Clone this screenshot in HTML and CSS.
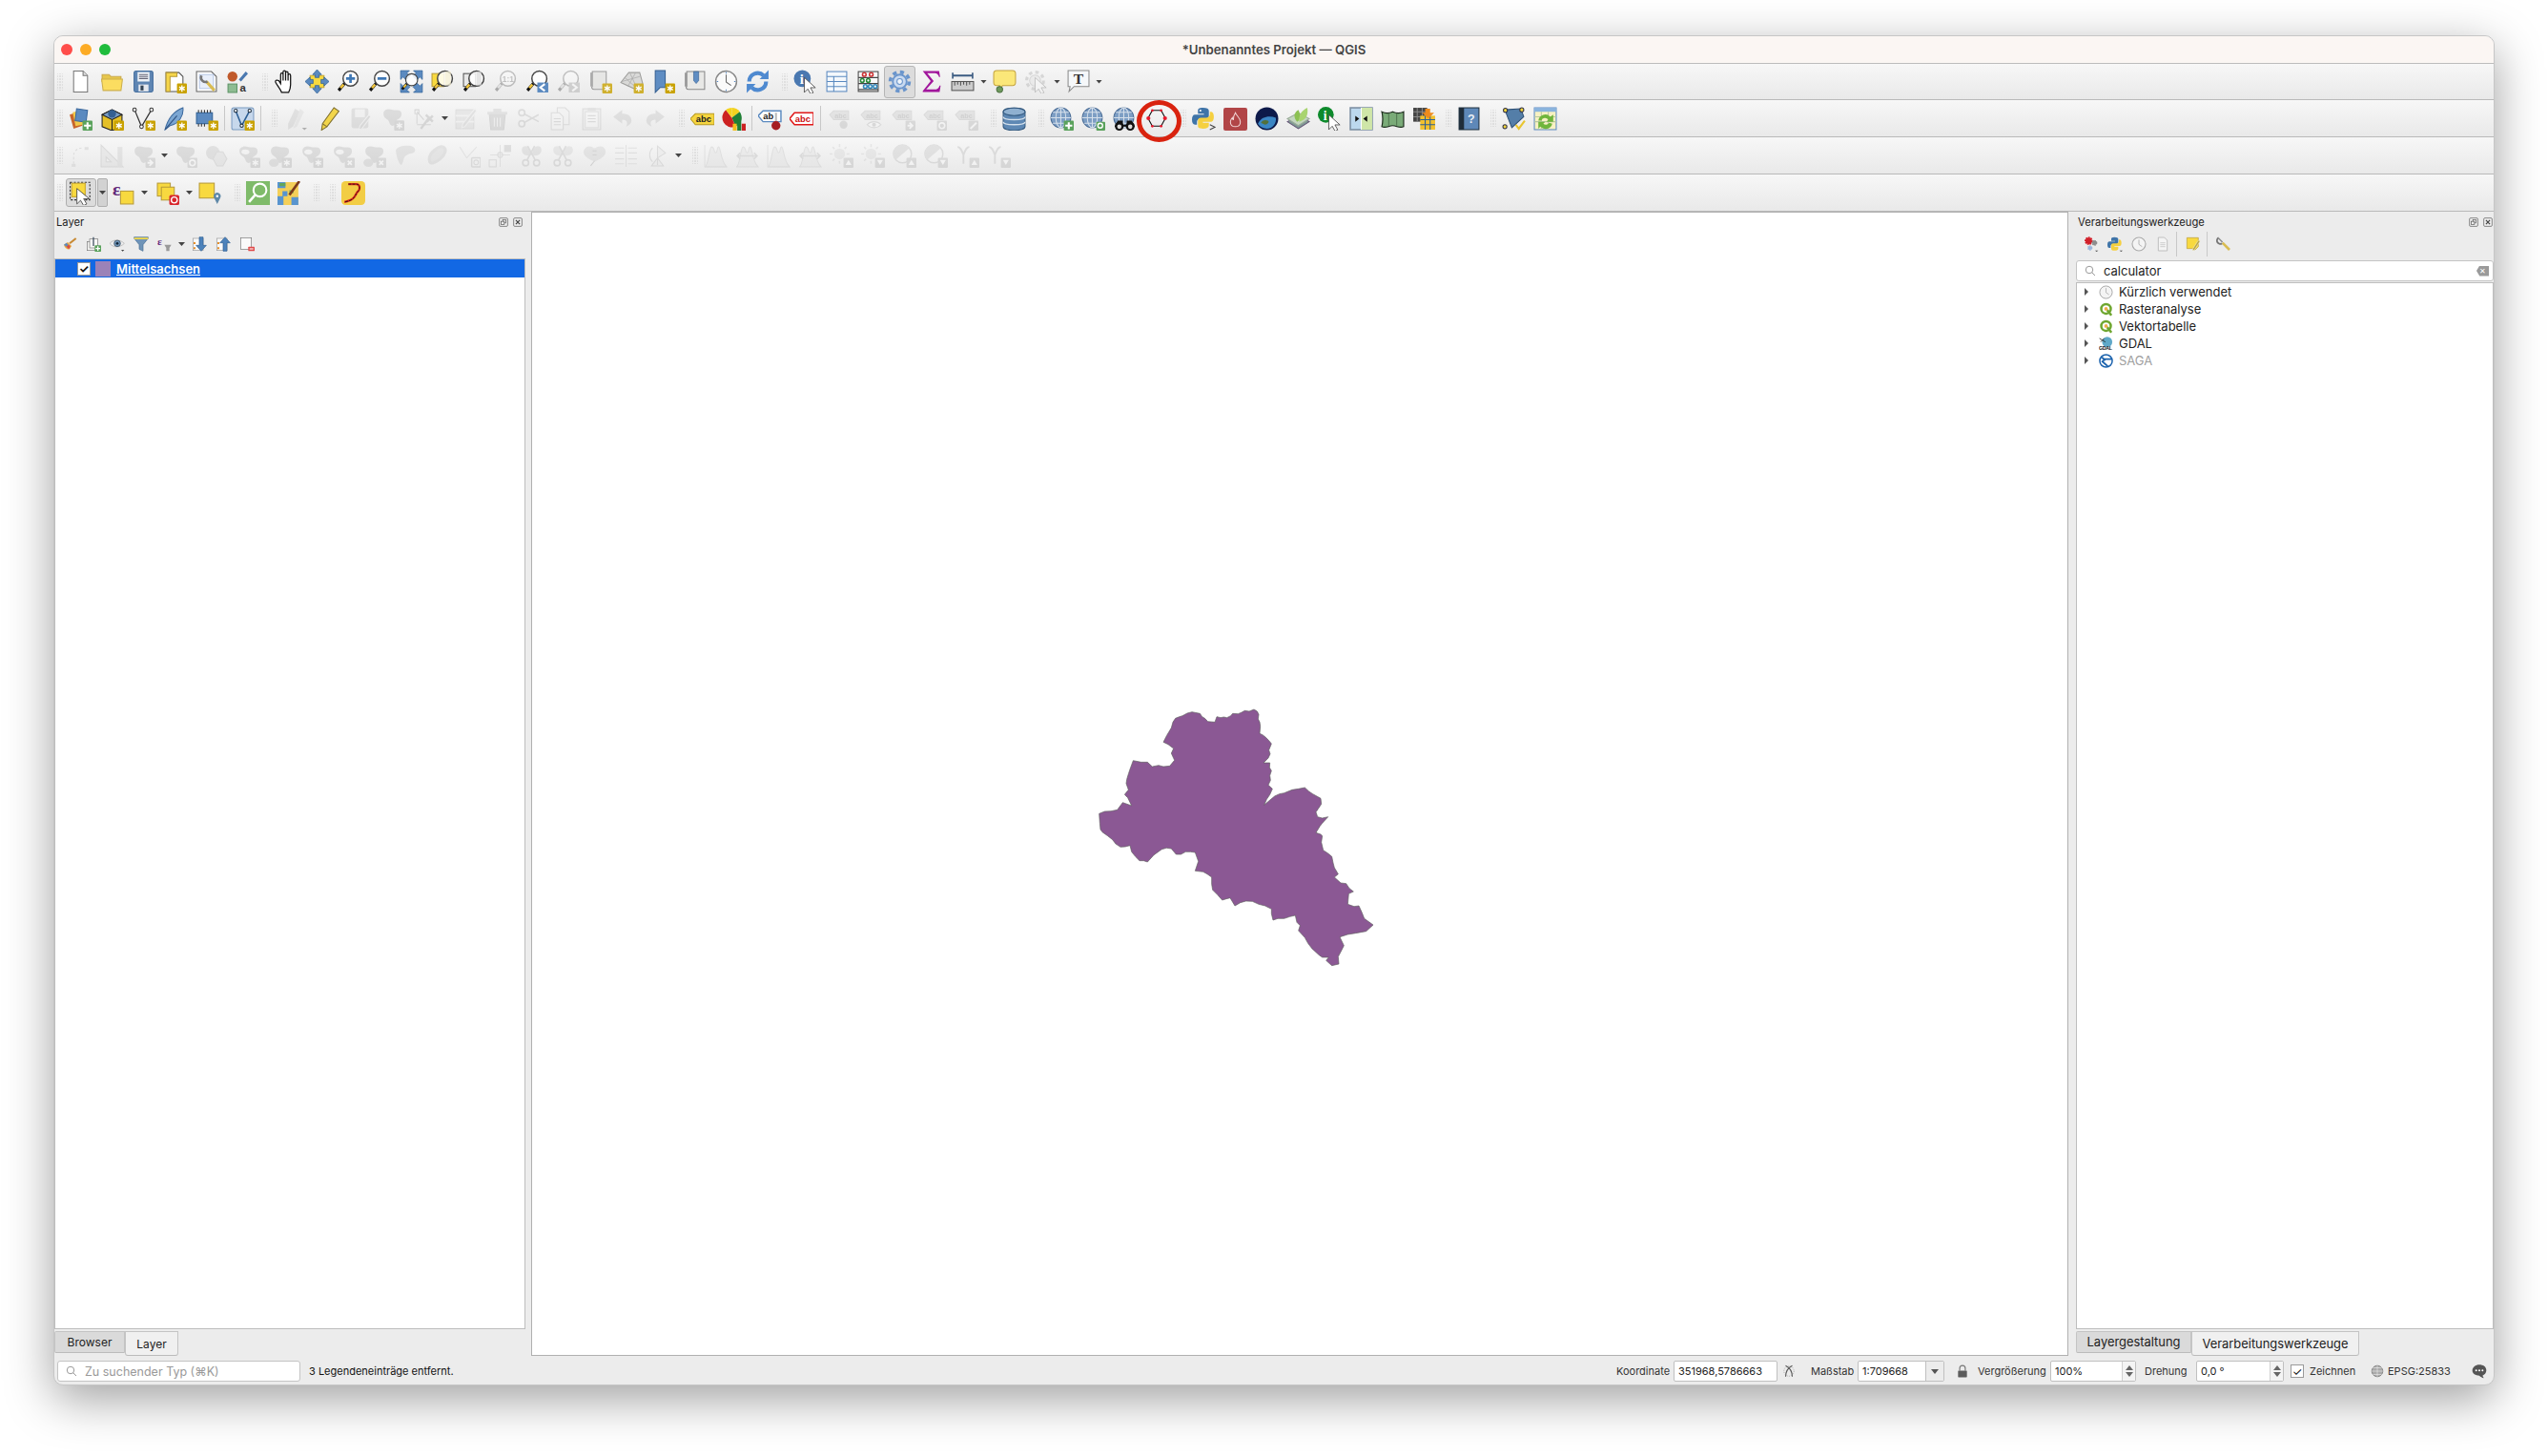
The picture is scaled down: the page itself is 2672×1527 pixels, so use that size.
FILE: index.html
```html
<!DOCTYPE html>
<html>
<head>
    <meta charset="utf-8" />
    <title>*Unbenanntes Projekt — QGIS</title>
    <link rel="stylesheet" href="styles.css">
</head>
<body>
<svg class="defs" width="0" height="0">
  <defs>
    <g id="badge"><rect x="14" y="14" width="10" height="10" rx="1" fill="#c9a200"/><path d="M19 15.8v6.4M16.2 17.4l5.6 3.2M16.2 20.6l5.6-3.2" stroke="#fff" stroke-width="1.3"/></g>
    <g id="plus"><rect x="14" y="14" width="10" height="10" rx="1" fill="#5aa25c"/><path d="M19 15.5v7M15.5 19h7" stroke="#fff" stroke-width="2"/></g>
    <g id="mag"><path d="M8 14l-6 7" stroke="#111" stroke-width="3"/><path d="M7 15l-3 3.5" stroke="#f2c63c" stroke-width="2.4"/><circle cx="14" cy="9" r="7.5" fill="#fff" fill-opacity=".85" stroke="#444" stroke-width="1.4"/></g>
    <g id="arrow"><path d="M11 8v15l3.5-3.5 2.8 5 2.7-1.300-2.800-5h5z" fill="#fff" stroke="#444" stroke-width=".8"/></g>
    <g id="blob"><path d="M3 7c0-5 6-5 9-4s8-1 9 3-2 6-4 7-1 5-4 6-4-3-5-5-5-2-5-7z" fill="#a9aba5"/></g>
    <g id="dock"><rect x="14" y="14" width="10" height="10" rx="1" fill="#a5a7a2"/></g>
    <g id="globe"><circle cx="11" cy="11" r="10" fill="#7d9ec4" stroke="#4d6f98"/><path d="M1 11h20M11 1v20M3 5.5h16M3 16.5h16" stroke="#d5dfea"/><ellipse cx="11" cy="11" rx="5" ry="10" fill="none" stroke="#d5dfea"/></g>
    <g id="labelgray"><path d="M1 8l4-4h15v9H5z" fill="#c2c3bb" stroke="#a7a89f"/><text x="6" y="11.5" class="glyph" font-size="7" fill="#888">abc</text></g>
    <g id="table"><rect x="2" y="2" width="20" height="20" fill="#f4f8fc" stroke="#5b8ac0"/><path d="M2 7h20M2 12h20M2 17h20M9 7v15" stroke="#5b8ac0"/></g>
    <g id="scissors"><circle cx="6" cy="19" r="3" fill="none" stroke="#a9aba5" stroke-width="1.6"/><circle cx="17" cy="19" r="3" fill="none" stroke="#a9aba5" stroke-width="1.6"/><path d="M7 17L15 2M16 17L8 2" stroke="#a9aba5" stroke-width="1.6"/></g>

    <symbol id="i-doc" viewBox="0 0 24 24"><path d="M5 1.5h9.5l4.5 4.5v16.5H5z" fill="#fff" stroke="#777"/><path d="M14.5 1.5V6H19" fill="#ddd" stroke="#777"/></symbol>
    <symbol id="i-folder" viewBox="0 0 24 24"><path d="M2 5h7l2 2h10v5H2z" fill="#e6c64c" stroke="#c9a94a"/><path d="M3 21L1.5 9.5h21L21 21z" fill="#fbdd60" stroke="#cdb04e"/></symbol>
    <symbol id="i-save" viewBox="0 0 24 24"><rect x="2.5" y="1.500" width="19" height="21" rx="2" fill="#5f86b3" stroke="#456f9f"/><rect x="6" y="2.5" width="12" height="9.5" fill="#eef2f6"/><path d="M7.5 5h9M7.5 7h9M7.5 9h9" stroke="#667"/><rect x="7" y="15" width="10" height="7" fill="#e4e8ee"/><rect x="9" y="16" width="3" height="5" fill="#345"/></symbol>
    <symbol id="i-layout" viewBox="0 0 24 24"><path d="M3 3h13l4 4v15H3z" fill="#fff" stroke="#555"/><path d="M3 3h11v4H7v15H3z" fill="#f6d64a" stroke="#b79a38"/><use href="#badge"/></symbol>
    <symbol id="i-layoutmgr" viewBox="0 0 24 24"><path d="M2 2h15l5 5v15H2z" fill="#fff" stroke="#666"/><rect x="5" y="5" width="14" height="14" fill="#e9effa" stroke="#b7c7e6"/><path d="M12 12l8 9" stroke="#d9bc52" stroke-width="3"/><path d="M7 6a4.5 4.5 0 0 0 6 6" fill="none" stroke="#777" stroke-width="2.5"/></symbol>
    <symbol id="i-style" viewBox="0 0 24 24"><circle cx="6.5" cy="7" r="5" fill="#c05a2c"/><rect x="2" y="14.5" width="9" height="8.5" fill="#8ebc92" stroke="#5e9468"/><path d="M14 11L21 3" stroke="#4a78b0" stroke-width="3"/><text x="14" y="22" class="glyph" font-size="11" fill="#333">a</text></symbol>
    <symbol id="i-hand" viewBox="0 0 24 24"><path d="M8 23c-1-3-5-8-6-10-1-2 1-3 3-2l2 3V5c0-2 2.5-2 2.5 0v6V2.5c0-2 2.5-2 2.5 0V11V3.5c0-2 2.5-2 2.5 0V11V6c0-2 2.5-2 2.5 0v9c0 3-1 6-2 8z" fill="#fff" stroke="#111" stroke-width="1.2"/></symbol>
    <symbol id="i-pansel" viewBox="0 0 24 24"><rect x="5" y="6" width="14" height="12" fill="#f8d93f" stroke="#c9a82c"/><path d="M12 0l4.5 5H14v3h-4V5H7.5zM12 24l4.5-5H14v-3h-4v3H7.5zM0 12l5-4.5V10h3v4H5v2.5zM24 12l-5-4.5V10h-3v4h3v2.5z" fill="#5b8ac0" stroke="#2d5f94" stroke-width=".7"/></symbol>
    <symbol id="i-zoomin" viewBox="0 0 24 24"><use href="#mag"/><path d="M14 4.5v9M9.5 9h9" stroke="#3f78b5" stroke-width="2.6"/></symbol>
    <symbol id="i-zoomout" viewBox="0 0 24 24"><use href="#mag"/><path d="M9.5 9h9" stroke="#3f78b5" stroke-width="2.6"/></symbol>
    <symbol id="i-zoomfull" viewBox="0 0 24 24"><g fill="#5b8ac0" stroke="#2d5f94" stroke-width=".6"><path id="corner" d="M1 1h9L7.5 3.5 10.5 6.5 6.5 10.5 3.5 7.5 1 10z"/><use href="#corner" transform="rotate(90 12 12)"/><use href="#corner" transform="rotate(180 12 12)"/><use href="#corner" transform="rotate(270 12 12)"/></g><g transform="translate(1 3) scale(.8)"><use href="#mag"/></g></symbol>
    <symbol id="i-zoomlayer" viewBox="0 0 24 24"><rect x="1" y="4" width="12" height="13" fill="#f8d93f" stroke="#b79a38"/><use href="#mag"/><rect x="14" y="2" width="6" height="14" fill="#f4efd5" opacity=".8"/></symbol>
    <symbol id="i-zoomsel" viewBox="0 0 24 24"><rect x="1" y="4" width="12" height="13" fill="#e8e8e8" stroke="#555"/><use href="#mag"/><rect x="14" y="2" width="5" height="14" fill="#ddd" opacity=".8"/></symbol>
    <symbol id="i-zoom11" viewBox="0 0 24 24"><use href="#mag"/><text x="8.5" y="12" class="glyph" font-size="8" fill="#555">1:1</text></symbol>
    <symbol id="i-zoomlast" viewBox="0 0 24 24"><use href="#mag"/><rect x="12" y="13" width="11" height="10" fill="#5b8ac0"/><path d="M19.5 14.5L15 18l4.5 3.5" fill="none" stroke="#fff" stroke-width="2"/></symbol>
    <symbol id="i-zoomnext" viewBox="0 0 24 24"><use href="#mag"/><rect x="12" y="13" width="11" height="10" fill="#888"/><path d="M15.5 14.5L20 18l-4.5 3.5" fill="none" stroke="#fff" stroke-width="2"/></symbol>
    <symbol id="i-mapnew" viewBox="0 0 24 24"><path d="M4 2h14v18H6c-3 0-3-3-2-3z" fill="#e4e4e2" stroke="#888"/><path d="M3 3v14" stroke="#999" stroke-width="2"/><use href="#badge"/></symbol>
    <symbol id="i-map3d" viewBox="0 0 24 24"><path d="M1 13L9 3h11l3 11-9 5z" fill="#d4d4d2" stroke="#8a8a88"/><path d="M5 8l10 9M10 3l6 13M16 3l-8 14M2 12l18-5" stroke="#999" stroke-width=".7"/><use href="#badge"/></symbol>
    <symbol id="i-bmnew" viewBox="0 0 24 24"><path d="M4 1h10v17h-5l-5 5z" fill="#5f8dc3" stroke="#345f92"/><use href="#badge"/></symbol>
    <symbol id="i-bms" viewBox="0 0 24 24"><path d="M4 2h18v18H6c-3 0-3-3-2-3z" fill="#e8e8e6" stroke="#888"/><path d="M3 3v14" stroke="#999" stroke-width="2"/><path d="M11 2h5v9l-2.5 3L11 11z" fill="#5f8dc3" stroke="#345f92" stroke-width=".6"/></symbol>
    <symbol id="i-clock" viewBox="0 0 24 24"><circle cx="12" cy="12" r="10.5" fill="#fafafa" stroke="#888" stroke-width="1.4"/><path d="M12 5v7.5l5 3.5" fill="none" stroke="#666"/><path d="M12 2.5V4M12 20v1.5M2.5 12H4M20 12h1.5" stroke="#5b8ac0"/></symbol>
    <symbol id="i-refresh" viewBox="0 0 24 24"><path d="M3.5 12a8.5 8.5 0 0 1 14.5-6" fill="none" stroke="#4f8ad0" stroke-width="4"/><path d="M14 9.5h9v-9z" fill="#4f8ad0"/><path d="M20.5 12a8.5 8.5 0 0 1-14.5 6" fill="none" stroke="#4f8ad0" stroke-width="4"/><path d="M10 14.5H1v9z" fill="#4f8ad0"/></symbol>
    <symbol id="i-identify" viewBox="0 0 24 24"><circle cx="9" cy="9" r="8.5" fill="#4a78b0"/><text x="6.5" y="14" class="glyph serif" font-size="14" fill="#fff">i</text><use href="#arrow"/></symbol>
    <symbol id="i-attr" viewBox="0 0 24 24"><use href="#table"/></symbol>
    <symbol id="i-abacus" viewBox="0 0 24 24"><rect x="2" y="2" width="20" height="20" fill="#fafafa" stroke="#444"/><path d="M2 8h20M2 14h20M2 20h20" stroke="#444" stroke-width="1.3"/><g fill="none" stroke-width="1.5"><circle cx="8" cy="5" r="1.8" stroke="#c33"/><circle cx="15" cy="5" r="1.8" stroke="#c33"/><circle cx="6" cy="11" r="1.8" stroke="#2a8a3a"/><circle cx="12" cy="11" r="1.8" stroke="#2a8a3a"/><circle cx="9" cy="17" r="1.8" stroke="#38b"/><circle cx="14" cy="17" r="1.8" stroke="#38b"/><circle cx="19" cy="17" r="1.8" stroke="#38b"/></g></symbol>
    <symbol id="i-gear" viewBox="0 0 24 24"><circle cx="12" cy="12" r="9.5" fill="none" stroke="#6a95cc" stroke-width="3.5" stroke-dasharray="4 3.46"/><circle cx="12" cy="12" r="7" fill="#c9daf0" stroke="#6a95cc" stroke-width="1.8"/><circle cx="12" cy="12" r="2.8" fill="#eef4fb" stroke="#6a95cc"/></symbol>
    <symbol id="i-sum" viewBox="0 0 24 24"><path d="M3.5 1.5H20l1 6h-1c-1-3-2-4-5-4H8l6.5 8L7 20h8c3 0 4.500-1 5.500-4h1l-1 6.500h-17v-1l8-10-8-10z" fill="#a1169c"/></symbol>
    <symbol id="i-ruler" viewBox="0 0 24 24"><path d="M2 6h20" stroke="#3c5c82" stroke-width="2"/><path d="M2 3v6M22 3v6" stroke="#3c5c82" stroke-width="1.6"/><rect x="1" y="12" width="22" height="9" fill="#ccc" stroke="#555"/><path d="M4 12v4M7 12v3M10 12v4M13 12v3M16 12v4M19 12v3" stroke="#555"/></symbol>
    <symbol id="i-tip" viewBox="0 0 24 24"><path d="M4 1h16c2 0 3 1 3 3v9c0 2-1 3-3 3H10l-3 4v-4H4c-2 0-3-1-3-3V4c0-2 1-3 3-3z" fill="#fbe779" stroke="#c5a43d"/><circle cx="7" cy="20" r="3" fill="#6f9a5d" stroke="#4a7040"/></symbol>
    <symbol id="i-run" viewBox="0 0 24 24"><circle cx="11" cy="11" r="8.5" fill="none" stroke="#999" stroke-width="3" stroke-dasharray="3.5 3.17"/><circle cx="11" cy="11" r="5.5" fill="#ddd" stroke="#999"/><use href="#arrow"/></symbol>
    <symbol id="i-text" viewBox="0 0 24 24"><path d="M2 1h21v16H8l-5 5 1-5H2z" fill="#f6f8fa" stroke="#8a8a8a"/><text x="7.5" y="14" class="glyph serif" font-size="15" fill="#333">T</text></symbol>

    <symbol id="i-addlayer" viewBox="0 0 24 24"><path d="M1 8l9-3 4 14-9 3z" fill="#c7652c"/><path d="M4 5.5l9-2 3 14-9 2z" fill="#f1c84a"/><path d="M8 2l11 1.5-1.5 12-11-1.5z" fill="#5b8ac0" stroke="#3d6a9e"/><use href="#plus"/></symbol>
    <symbol id="i-gpkg" viewBox="0 0 24 24"><path d="M2 8l10-5 10 5v12l-10 4-10-4z" fill="#e5c028" stroke="#222"/><path d="M2 8l10 5 10-5-10-5z" fill="#7a9cc4" stroke="#222"/><path d="M12 13v11" stroke="#222"/><circle cx="12" cy="7" r="4" fill="#345f92"/><use href="#badge"/></symbol>
    <symbol id="i-shp" viewBox="0 0 24 24"><path d="M3 3l7 17L20 3" fill="none" stroke="#333" stroke-width="1.2"/><circle cx="3" cy="3" r="1.8" fill="#fff" stroke="#333"/><circle cx="20" cy="3" r="1.8" fill="#fff" stroke="#333"/><circle cx="10" cy="20" r="1.8" fill="#fff" stroke="#333"/><use href="#badge"/></symbol>
    <symbol id="i-feather" viewBox="0 0 24 24"><path d="M2 23C5 11 12 4 20 1c1 8-4 16-13 18z" fill="#7ba6d2" stroke="#3d6a9e"/><path d="M2 23L14 9" stroke="#2d5080"/><use href="#badge"/></symbol>
    <symbol id="i-temp" viewBox="0 0 24 24"><rect x="2" y="6" width="16" height="11" fill="#5b8ac0" stroke="#2d5f94"/><path d="M4 3v3M7 3v3M10 3v3M13 3v3M16 3v3M4 17v3M7 17v3M10 17v3" stroke="#333"/><use href="#badge"/></symbol>
    <symbol id="i-virtual" viewBox="0 0 24 24"><rect x="1" y="1" width="22" height="22" rx="2" fill="#c7d8ec" stroke="#7b9bc0"/><path d="M5 4l6 15 8-15" fill="none" stroke="#2d5f94" stroke-width="1.5"/><circle cx="5" cy="4" r="1.6" fill="#fff" stroke="#234"/><circle cx="19" cy="4" r="1.6" fill="#fff" stroke="#234"/><circle cx="11" cy="19" r="1.6" fill="#fff" stroke="#234"/><use href="#badge"/></symbol>
    <symbol id="i-pencils" viewBox="0 0 24 24"><path d="M10 2l5 3-7 15-5 3 0-6z" fill="#b9b9b2"/><path d="M15 2l4 3-7 15-4 2 2-5z" fill="#cfcfc8"/><path d="M17 21h5l-2.5 2.5z" fill="#222"/></symbol>
    <symbol id="i-pencil" viewBox="0 0 24 24"><path d="M16.5 1l5 3.5L9.5 20 4 23.5 5 17z" fill="#f2d54a" stroke="#807030"/><path d="M5 17l4.5 3" stroke="#807030"/></symbol>
    <symbol id="i-saveedit" viewBox="0 0 24 24"><rect x="2.5" y="1.5" width="17" height="20" rx="2" fill="#b5b5b0"/><rect x="6" y="2.5" width="10" height="8" fill="#eee"/><path d="M22 10l-9 12-3 1 1-4 9-11z" fill="#a9a9a2" stroke="#eee"/></symbol>
    <symbol id="i-addpoly" viewBox="0 0 24 24"><use href="#blob"/><use href="#dock"/><use href="#badge"/></symbol>
    <symbol id="i-vertex" viewBox="0 0 24 24"><path d="M5 5l7 8M3 3h4v4H3zM5 7v10M5 18h14" fill="none" stroke="#999"/><path d="M9 22l9-12M14 8l7 7M21 9l-6 6" stroke="#9c9c98" stroke-width="2.4"/></symbol>
    <symbol id="i-edittable" viewBox="0 0 24 24"><rect x="2" y="3" width="18" height="19" fill="#d2cfb8" stroke="#b4b19a"/><path d="M2 9h18M2 15h18" stroke="#f4f4f0" stroke-width="1.5"/><path d="M21 2l2 2-12 16-3 1 1-4z" fill="#bbb" stroke="#eee"/></symbol>
    <symbol id="i-delete" viewBox="0 0 24 24"><path d="M4 8h16l-1.5 15h-13z" fill="#c2a9a4" stroke="#ab958f"/><path d="M2 5h20v3H2zM8 2h8v3H8z" fill="#c9b9b4"/><path d="M9 11v9M12 11v9M15 11v9" stroke="#eee"/></symbol>
    <symbol id="i-cut" viewBox="0 0 24 24"><g transform="rotate(90 12 12)"><use href="#scissors"/></g></symbol>
    <symbol id="i-copy" viewBox="0 0 24 24"><path d="M9 1h8l4 4v13H9z" fill="#f2f2f0" stroke="#aaa"/><path d="M3 6h8l4 4v13H3z" fill="#f6f6f4" stroke="#aaa"/><path d="M5.5 12h7M5.5 15h7M5.5 18h7" stroke="#aaa"/></symbol>
    <symbol id="i-paste" viewBox="0 0 24 24"><rect x="3" y="2" width="18" height="21" fill="#e4e4e0" stroke="#aaa"/><rect x="5.5" y="5" width="13" height="16" fill="#fafafa" stroke="#bbb"/><rect x="8" y="1" width="8" height="3" fill="#bbb"/><path d="M8 9h8M8 12h8M8 15h8" stroke="#aaa"/></symbol>
    <symbol id="i-undo" viewBox="0 0 24 24"><path d="M11 3L2 10l9 7v-4c5 0 6 3 4 7 5-2 6-5 5-8-1-4-5-5-9-5z" fill="#b6b6b1"/></symbol>
    <symbol id="i-redo" viewBox="0 0 24 24"><path d="M13 3l9 7-9 7v-4c-5 0-6 3-4 7-5-2-6-5-5-8 1-4 5-5 9-5z" fill="#b6b6b1"/></symbol>
    <symbol id="i-abc" viewBox="0 0 24 24"><path d="M0 12l5-5h19v11H5z" fill="#f5d53f" stroke="#b89a20"/><text x="5.5" y="15.5" class="glyph bold" font-size="9" fill="#222">abc</text></symbol>
    <symbol id="i-pie" viewBox="0 0 24 24"><path d="M10 11V1a10 10 0 0 1 8 4z" fill="#f3d21e"/><path d="M10 11l8-6a10 10 0 0 1-4 15z" fill="#1f7f35"/><path d="M10 11l4 9A10 10 0 0 1 4 3z" fill="#c22"/><path d="M10 1a10 10 0 0 0-6 2l6 8z" fill="#f3d21e"/><rect x="11" y="17" width="4" height="7" fill="#f3bf1e"/><rect x="15.5" y="11" width="4" height="13" fill="#1f7f35"/><rect x="20" y="17" width="4" height="7" fill="#c22"/></symbol>
    <symbol id="i-abpin" viewBox="0 0 24 24"><path d="M0 9l5-5h18v11H5z" fill="#fff" stroke="#5b8ac0" stroke-width="1.4"/><text x="5" y="12.5" class="glyph bold" font-size="9" fill="#222">ab</text><path d="M17 6h2v10h-2z" fill="#bbb"/><circle cx="18" cy="19" r="4.5" fill="#a61e22"/></symbol>
    <symbol id="i-abcred" viewBox="0 0 24 24"><path d="M0 12l5-6h19v12H5z" fill="#fff" stroke="#e01818" stroke-width="1.4"/><text x="5.5" y="15.5" class="glyph bold" font-size="9" fill="#c11">abc</text></symbol>
    <symbol id="i-lblpin" viewBox="0 0 24 24"><use href="#labelgray"/><circle cx="15" cy="18" r="4" fill="#a8a8a2"/></symbol>
    <symbol id="i-lbleye" viewBox="0 0 24 24"><use href="#labelgray"/><path d="M7 18c4-4 10-4 14 0-4 4-10 4-14 0z" fill="#fff" stroke="#a8a8a2"/><circle cx="14" cy="18" r="2" fill="#a8a8a2"/></symbol>
    <symbol id="i-lblarrow" viewBox="0 0 24 24"><use href="#labelgray"/><use href="#dock"/><path d="M16 19h4M18 16l3 3-3 3" stroke="#fff" stroke-width="1.8" fill="none"/></symbol>
    <symbol id="i-lblrot" viewBox="0 0 24 24"><use href="#labelgray"/><use href="#dock"/><circle cx="19" cy="19" r="2.8" fill="none" stroke="#fff" stroke-width="1.5"/></symbol>
    <symbol id="i-lbledit" viewBox="0 0 24 24"><use href="#labelgray"/><use href="#dock"/><path d="M16 22l6-6" stroke="#fff" stroke-width="2"/></symbol>
    <symbol id="i-db" viewBox="0 0 24 24"><path d="M1 5c0-5 22-5 22 0v15c0 5-22 5-22 0z" fill="#5e88b4" stroke="#33597f"/><ellipse cx="12" cy="5" rx="11" ry="3.8" fill="#8fb0d0" stroke="#33597f"/><path d="M1 10c0 4 22 4 22 0M1 15c0 4 22 4 22 0" fill="none" stroke="#d4e0ec" stroke-width="1.3"/></symbol>
    <symbol id="i-globeadd" viewBox="0 0 24 24"><use href="#globe"/><use href="#plus"/></symbol>
    <symbol id="i-globefind" viewBox="0 0 24 24"><use href="#globe"/><rect x="15" y="15" width="9" height="9" rx="1" fill="#5aa25c"/><circle cx="19" cy="19" r="2.4" fill="none" stroke="#fff" stroke-width="1.3"/></symbol>
    <symbol id="i-globebin" viewBox="0 0 24 24"><use href="#globe"/><path d="M5 14h5v4h4v-4h5l3 6H2z" fill="#111"/><circle cx="6.5" cy="19.5" r="4.5" fill="#111"/><circle cx="17.5" cy="19.5" r="4.5" fill="#111"/><circle cx="6.5" cy="20" r="2.2" fill="#ddd"/><circle cx="17.5" cy="20" r="2.2" fill="#ddd"/></symbol>
    <symbol id="i-hex" viewBox="0 0 24 24"><path d="M7 3h10l5 9-5 9H7l-5-9z" fill="none" stroke="#111" stroke-width="1.2"/><g fill="#e8182c"><circle cx="2.5" cy="12" r="2.3"/><circle cx="21.5" cy="12" r="2.3"/><circle cx="7" cy="3" r="1.5"/><circle cx="17" cy="3" r="1.5"/><circle cx="7" cy="21" r="1.5"/><circle cx="17" cy="21" r="1.5"/></g></symbol>
    <symbol id="i-python" viewBox="0 0 24 24"><path d="M11 1c-4 0-5 1-5 3v3h6v1H3c-2 0-3 2-3 5s1 5 3 5h2v-3c0-2 2-3 4-3h5c2 0 3-1 3-3V4c0-2-2-3-6-3z" fill="#3f74a8"/><path d="M11 22c4 0 6-1 6-3v-3h-6v-1h8c2 0 3-2 3-5s-1-5-3-5h-1v3c0 2-2 3-4 3H9c-2 0-3 1-3 3v5c0 2 1 3 5 3z" fill="#f5d040"/><circle cx="8.5" cy="3.8" r="1" fill="#fff"/><path d="M18 18l5 2.5-5 2.5" fill="none" stroke="#444"/></symbol>
    <symbol id="i-fire" viewBox="0 0 24 24"><rect x="0" y="1" width="24" height="23" rx="2" fill="#b14547"/><path d="M12 6c1 3 5 5 5 9 0 3-2 5-5 5s-5-2-5-5c0-2 1-3 2-4 0 2 1 2 1 2 0-2 0-4 2-7z" fill="none" stroke="#f2d5d5"/></symbol>
    <symbol id="i-earth" viewBox="0 0 24 24"><circle cx="12" cy="12" r="11.5" fill="#0d1a4a"/><path d="M3 17c4-8 12-8 18-6 1 5-3 11-9 11-4 0-7-2-9-5z" fill="#3b86c4"/><path d="M6 16c2-3 5-3 7-2s0 4-3 4z" fill="#53703a"/></symbol>
    <symbol id="i-leaf" viewBox="0 0 24 24"><path d="M1 15l11-6 11 6-11 7z" fill="#7f9a94" stroke="#657"/><path d="M1 12l11-6 11 6-11 7z" fill="#c4d7c0" stroke="#99aa99"/><path d="M11 15C7 11 7 6 12 3c2 4 3 9-1 12z" fill="#8cc152"/><path d="M13 15c-1-6 2-11 8-14 1 6 0 12-8 14z" fill="#a8d46f"/></symbol>
    <symbol id="i-info" viewBox="0 0 24 24"><circle cx="8" cy="8" r="8" fill="#0e8a2c"/><text x="5.5" y="13" class="glyph serif" font-size="13" fill="#fff">i</text><use href="#arrow"/></symbol>
    <symbol id="i-swipe" viewBox="0 0 24 24"><rect x="1" y="1" width="22" height="22" fill="#bcd8ee" stroke="#7a8ea2" stroke-width="1.5"/><path d="M12 1h11v22H12z" fill="#cfe6a8"/><path d="M12 1v22" stroke="#fff"/><path d="M10 12l-4-3v6zM14 12l4-3v6z" fill="#111"/></symbol>
    <symbol id="i-greenmap" viewBox="0 0 24 24"><path d="M1 5c4 2 7 2 11 0 4 2 7 2 11 0v15c-4 2-7-1-11-1s-7 3-11 1c1-4 1-11 0-15z" fill="#7aab78" stroke="#1b2a1b" stroke-width="1.1"/><path d="M8 6v13M16 6v13" stroke="#3f5f3f" stroke-width=".7"/></symbol>
    <symbol id="i-raster" viewBox="0 0 24 24"><rect x="1" y="1" width="14" height="14" fill="#444"/><path d="M1 5h14M1 10h14M5 1v14M10 1v14" stroke="#888"/><rect x="8" y="9" width="15" height="14" fill="#f2c02c"/><path d="M8 13h15M8 18h15M13 9v14M18 9v14" stroke="#2d5f94"/><path d="M13 2h5v4h4l-6 6-6-6h3z" fill="#ee8b1c"/></symbol>
    <symbol id="i-book" viewBox="0 0 24 24"><rect x="2" y="1" width="20" height="22" fill="#5e88b8" stroke="#1f3040"/><rect x="2" y="1" width="5" height="22" fill="#1f2d3a"/><text x="10.5" y="16" class="glyph" font-size="12" fill="#e8eef4">?</text></symbol>
    <symbol id="i-node" viewBox="0 0 24 24"><path d="M3 3l16-1 3 8-12 11z" fill="#547ea8" stroke="#2d4f74"/><g fill="#f2d63e" stroke="#334"><circle cx="3.5" cy="3.5" r="2"/><circle cx="20" cy="3" r="2"/><circle cx="3" cy="20" r="2"/></g><path d="M14 18l3 4 6-8" fill="none" stroke="#e8c530" stroke-width="2"/></symbol>
    <symbol id="i-tablesync" viewBox="0 0 24 24"><rect x="1" y="1" width="22" height="22" fill="#f7f1c2" stroke="#5b8ac0"/><rect x="1" y="1" width="22" height="4" fill="#8ab4de"/><path d="M1 10h22M1 15h22M8 5v18M15 5v18" stroke="#b7c7a0"/><path d="M5 14a7 7 0 0 1 12-4l3-2v7h-7l2-2a4 4 0 0 0-7 1z" fill="#6fb53c"/><path d="M19 17a7 7 0 0 1-12 3l-2 2v-7h7l-2 2a4 4 0 0 0 6-1z" fill="#6fb53c"/></symbol>

    <symbol id="i-curve" viewBox="0 0 24 24"><path d="M5 20V12C5 7 9 4 14 4" fill="none" stroke="#b0b0ac" stroke-dasharray="2.5 2"/><rect x="3" y="20" width="4" height="3" fill="#bbb"/><rect x="16" y="3" width="4" height="3" fill="#bbb"/></symbol>
    <symbol id="i-square" viewBox="0 0 24 24"><path d="M1 1l22 22H1zM6 13v5h5z" fill="#d8d4c8" fill-rule="evenodd" stroke="#a9a597"/><path d="M20 3v20" stroke="#c5c1b4" stroke-width="5"/></symbol>
    <symbol id="i-blobarrow" viewBox="0 0 24 24"><use href="#blob"/><use href="#dock"/><path d="M16 19h4M18 16l3 3-3 3" stroke="#fff" stroke-width="1.8" fill="none"/></symbol>
    <symbol id="i-blobrot" viewBox="0 0 24 24"><use href="#blob"/><use href="#dock"/><circle cx="19" cy="19" r="2.8" fill="none" stroke="#fff" stroke-width="1.5"/></symbol>
    <symbol id="i-blobhex" viewBox="0 0 24 24"><circle cx="8" cy="9" r="7" fill="#b5b5b0"/><path d="M12 8h6l4 7-4 7h-6l-4-7z" fill="#cfcfca" stroke="#a9a9a4"/></symbol>
    <symbol id="i-ringadd" viewBox="0 0 24 24"><use href="#blob"/><ellipse cx="9" cy="8" rx="4" ry="2.5" fill="#f4f4f2"/><use href="#badge"/></symbol>
    <symbol id="i-partadd" viewBox="0 0 24 24"><use href="#blob"/><ellipse cx="6" cy="19" rx="5" ry="4" fill="#b5b5b0"/><use href="#badge"/></symbol>
    <symbol id="i-ringdel" viewBox="0 0 24 24"><use href="#blob"/><ellipse cx="9" cy="8" rx="4" ry="2.5" fill="#f4f4f2"/><use href="#dock"/><path d="M17 17l4 4M21 17l-4 4" stroke="#fff" stroke-width="1.6"/></symbol>
    <symbol id="i-partdel" viewBox="0 0 24 24"><use href="#blob"/><ellipse cx="6" cy="19" rx="5" ry="4" fill="#b5b5b0"/><use href="#dock"/><path d="M17 17l4 4M21 17l-4 4" stroke="#fff" stroke-width="1.6"/></symbol>
    <symbol id="i-reshape" viewBox="0 0 24 24"><path d="M2 6c2-4 10-5 15-4s6 6 2 7-8 2-9 6-2 8-4 5-4-10-4-14z" fill="#bcbcb7"/></symbol>
    <symbol id="i-offset" viewBox="0 0 24 24"><path d="M4 15c0-6 10-14 14-12s2 8-3 12-11 7-11 0z" fill="#c8c8c3" stroke="#bbb" stroke-width="3"/></symbol>
    <symbol id="i-reverse" viewBox="0 0 24 24"><path d="M3 3l7 11 10-11" fill="none" stroke="#c0c0bc"/><rect x="15" y="14" width="9" height="9" rx="1" fill="none" stroke="#aaa" stroke-width="1.5"/><circle cx="19.5" cy="18.5" r="2.3" fill="none" stroke="#aaa"/></symbol>
    <symbol id="i-trim" viewBox="0 0 24 24"><path d="M12 1v22M2 11h20" stroke="#bbb"/><circle cx="12" cy="11" r="2.5" fill="none" stroke="#aaa"/><rect x="16" y="1" width="7" height="7" fill="#aaa"/><rect x="1" y="16" width="7" height="7" fill="none" stroke="#aaa"/></symbol>
    <symbol id="i-split" viewBox="0 0 24 24"><path d="M3 3c5-3 8 2 9 8 1-6 4-11 9-8 3 5-2 11-9 8-7 3-12-3-9-8z" fill="#bcbcb7"/><use href="#scissors"/></symbol>
    <symbol id="i-splitparts" viewBox="0 0 24 24"><path d="M3 3c5-3 8 2 9 8 1-6 4-11 9-8 3 5-2 11-9 8-7 3-12-3-9-8z" fill="#c8c8c3"/><use href="#scissors"/></symbol>
    <symbol id="i-merge" viewBox="0 0 24 24"><path d="M1 7c2-6 8-5 10-3h2c2-2 9-3 10 3s-6 8-11 11C8 16 0 13 1 7z" fill="#c2c2bd"/><path d="M10 7h4M10 11h4M12 17l-4 5" stroke="#8f8f8a"/></symbol>
    <symbol id="i-lines" viewBox="0 0 24 24"><path d="M1 4h9M14 4h9M1 9h9M14 9h9M1 15h9M14 15h9M1 20h9M14 20h9M12 1v22" stroke="#b8b8b4"/></symbol>
    <symbol id="i-rotmark" viewBox="0 0 24 24"><path d="M12 2l8 7-8 5zM12 2v19M6 22l6-8 6 8z" fill="#e4e4e2" stroke="#aaa"/><path d="M7 4a10 10 0 0 0 0 14" fill="none" stroke="#aaa"/></symbol>
    <symbol id="i-hist" viewBox="0 0 24 24"><path d="M1 23c4 0 4-20 7-20s2 6 4 6 1-6 3-6 2 14 8 20z" fill="#dcdcd6" stroke="#b8b8b0"/><path d="M1 1v22h22" fill="none" stroke="#bbb"/></symbol>
    <symbol id="i-histarr" viewBox="0 0 24 24"><path d="M1 23c4 0 4-20 7-20s2 6 4 6 1-6 3-6 2 14 8 20z" fill="#dcdcd6" stroke="#b8b8b0"/><path d="M2 12h20M5 9l-3 3 3 3M19 9l3 3-3 3" fill="none" stroke="#aaa" stroke-width="1.5"/></symbol>
    <symbol id="i-sunup" viewBox="0 0 24 24"><circle cx="10" cy="10" r="5.5" fill="#cfcfc0"/><path d="M10 0v3M10 17v3M0 10h3M17 10h3M3 3l2 2M17 3l-2 2M3 17l2-2" stroke="#c4c4b4" stroke-width="1.5"/><use href="#dock"/><path d="M16 21l3-5 3 5z" fill="#fff"/></symbol>
    <symbol id="i-sundown" viewBox="0 0 24 24"><circle cx="10" cy="10" r="5.5" fill="#cfcfc0"/><path d="M10 0v3M10 17v3M0 10h3M17 10h3M3 3l2 2M17 3l-2 2M3 17l2-2" stroke="#c4c4b4" stroke-width="1.5"/><use href="#dock"/><path d="M16 16l3 5 3-5z" fill="#fff"/></symbol>
    <symbol id="i-contup" viewBox="0 0 24 24"><circle cx="10" cy="10" r="9" fill="#f4f4f2" stroke="#aaa" stroke-width="1.5"/><path d="M10 1a9 9 0 0 0-7 15L17 4a9 9 0 0 0-7-3z" fill="#bbb"/><use href="#dock"/><path d="M16 21l3-5 3 5z" fill="#fff"/></symbol>
    <symbol id="i-contdown" viewBox="0 0 24 24"><circle cx="10" cy="10" r="9" fill="#f4f4f2" stroke="#aaa" stroke-width="1.5"/><path d="M10 1a9 9 0 0 0-7 15L17 4a9 9 0 0 0-7-3z" fill="#bbb"/><use href="#dock"/><path d="M16 16l3 5 3-5z" fill="#fff"/></symbol>
    <symbol id="i-gammaup" viewBox="0 0 24 24"><path d="M2 3c3 0 4 3 6 8v9M14 3c-3 0-4 3-6 8" fill="none" stroke="#aaa" stroke-width="1.8"/><use href="#dock"/><path d="M16 21l3-5 3 5z" fill="#fff"/></symbol>
    <symbol id="i-gammadown" viewBox="0 0 24 24"><path d="M2 3c3 0 4 3 6 8v9M14 3c-3 0-4 3-6 8" fill="none" stroke="#aaa" stroke-width="1.8"/><use href="#dock"/><path d="M16 16l3 5 3-5z" fill="#fff"/></symbol>

    <symbol id="i-select" viewBox="0 0 24 24"><rect x="1.5" y="2" width="19" height="17" fill="none" stroke="#333" stroke-dasharray="2 1.5"/><rect x="3" y="3" width="13" height="13" fill="#f8d93f" stroke="#c9a82c"/><path d="M8 8v15l3.5-3.5 3 5 3-1.500-3-5h5.500z" fill="#fff" stroke="#444" stroke-width=".8"/></symbol>
    <symbol id="i-exprsel" viewBox="0 0 24 24"><text x="1" y="14" class="glyph serif" font-size="19" fill="#632a7a">&#949;</text><rect x="9" y="10" width="13" height="13" fill="#f8d93f" stroke="#b79a38"/></symbol>
    <symbol id="i-desel" viewBox="0 0 24 24"><rect x="1" y="2" width="13" height="13" fill="#f8d93f" stroke="#b79a38"/><rect x="5" y="6" width="13" height="13" fill="#f8d93f" stroke="#b79a38"/><rect x="13" y="14" width="10" height="10" rx="1.5" fill="#d8262c"/><circle cx="18" cy="19" r="3" fill="none" stroke="#fff" stroke-width="1.3"/></symbol>
    <symbol id="i-selpin" viewBox="0 0 24 24"><rect x="1" y="2" width="15" height="15" fill="#f8d93f" stroke="#b79a38"/><path d="M19 23l-3-6a3.5 3.5 0 1 1 6 0z" fill="#5e88a8"/><circle cx="19" cy="15" r="1.2" fill="#fff"/></symbol>
    <symbol id="i-locator" viewBox="0 0 24 24"><rect x="0" y="0" width="24" height="24" fill="#7fbb6a"/><circle cx="14" cy="9" r="6.5" fill="none" stroke="#fff" stroke-width="2"/><path d="M9 14l-6 7" stroke="#fff" stroke-width="2.4"/></symbol>
    <symbol id="i-mapbrush" viewBox="0 0 24 24"><rect x="0" y="1" width="21" height="23" fill="#f4cf58"/><path d="M0 1h8v6H0zM5 10h5v5H5zM14 16h7v8h-7zM0 15h6v9H0z" fill="#5894cf"/><path d="M2 2h6v3H2zM12 9h4v3h-4z" fill="#63a65c"/><path d="M22 0L12 14" stroke="#7b3a1c" stroke-width="2.6"/></symbol>
    <symbol id="i-route" viewBox="0 0 24 24"><rect x="0" y="0" width="24" height="24" rx="4" fill="#f2cd45"/><path d="M7 3h8c4 0 4 5 2 7s-2 3-4 6-5 4-10 5" fill="none" stroke="#e02a1e" stroke-width="2.2"/><path d="M7 3h8c4 0 4 5 2 7s-2 3-4 6-5 4-10 5" fill="none" stroke="#111" stroke-width=".8" stroke-dasharray="3 1"/></symbol>

    <symbol id="i-brush" viewBox="0 0 24 24"><path d="M22 3L12 11" stroke="#c88a34" stroke-width="3"/><path d="M3 13l6-4 6 6-3 5c-3 1-8-2-9-7z" fill="#e8a33c"/><path d="M3 13l4-3 3 3-3 3z" fill="#5b8ac0"/><path d="M7 16l3-3 3 2-2 5z" fill="#d84848"/></symbol>
    <symbol id="i-addgroup" viewBox="0 0 24 24"><rect x="2" y="8" width="13" height="14" fill="#f4f4f2" stroke="#777"/><rect x="6" y="4" width="13" height="14" fill="#f8f8f6" stroke="#777"/><path d="M12 1v14" stroke="#456" stroke-width="2"/><use href="#plus"/></symbol>
    <symbol id="i-eye" viewBox="0 0 24 24"><path d="M0 11c6-7 16-7 23 0-7 7-17 7-23 0z" fill="#eee" stroke="#aaa"/><circle cx="12" cy="11" r="5" fill="#6f94b8" stroke="#345"/><circle cx="12" cy="11" r="2" fill="#123"/><path d="M18 21h5l-2.5 2.5z" fill="#444"/></symbol>
    <symbol id="i-filter" viewBox="0 0 24 24"><path d="M1 1h22v2L15 13v10l-6-3v-7L1 3z" fill="#6f94b8" stroke="#456c92"/><path d="M1 2h22v2.5H1z" fill="#f2d84a"/></symbol>
    <symbol id="i-exprfilter" viewBox="0 0 24 24"><text x="0" y="14" class="glyph serif" font-size="17" fill="#632a7a">&#949;</text><path d="M11 13h11l-3 5v5h-5v-5z" fill="#999"/></symbol>
    <symbol id="i-expand" viewBox="0 0 24 24"><rect x="2" y="3" width="16" height="19" fill="#fafafa" stroke="#999"/><path d="M3 9h3v3H3zM3 17h3v3H3z" fill="#e8902a"/><path d="M12 1h6v13h5l-8 9-8-9h5z" fill="#4c82bb" stroke="#2d5f94"/></symbol>
    <symbol id="i-collapse" viewBox="0 0 24 24"><rect x="2" y="3" width="16" height="19" fill="#fafafa" stroke="#999"/><path d="M3 9h3v3H3zM3 17h3v3H3z" fill="#e8902a"/><path d="M12 23h6V10h5l-8-9-8 9h5z" fill="#4c82bb" stroke="#2d5f94"/></symbol>
    <symbol id="i-remove" viewBox="0 0 24 24"><rect x="2" y="2" width="17" height="18" fill="#fafafa" stroke="#777"/><rect x="14" y="16" width="10" height="7" rx="1" fill="#e04a4a"/><path d="M16 19.5h6" stroke="#fff" stroke-width="1.6"/></symbol>
    <symbol id="i-gears" viewBox="0 0 24 24"><circle cx="8" cy="7" r="5" fill="#d2202a" stroke="#d2202a" stroke-width="3" stroke-dasharray="2.5 1.2"/><circle cx="17" cy="10" r="3.5" fill="#8d8d8d" stroke="#8d8d8d" stroke-width="2" stroke-dasharray="2 1"/><circle cx="10" cy="18" r="3" fill="#9ab6dc" stroke="#9ab6dc" stroke-width="2" stroke-dasharray="2 1"/><path d="M18 22h5l-2.5 2z" fill="#444"/></symbol>
    <symbol id="i-pysmall" viewBox="0 0 24 24"><path d="M11 1c-4 0-5 1-5 3v3h6v1H3c-2 0-3 2-3 5s1 5 3 5h2v-3c0-2 2-3 4-3h5c2 0 3-1 3-3V4c0-2-2-3-6-3z" fill="#3f74a8"/><path d="M11 22c4 0 6-1 6-3v-3h-6v-1h8c2 0 3-2 3-5s-1-5-3-5h-1v3c0 2-2 3-4 3H9c-2 0-3 1-3 3v5c0 2 1 3 5 3z" fill="#f5d040"/><path d="M19 22h5l-2.5 2z" fill="#444"/></symbol>
    <symbol id="i-clockoff" viewBox="0 0 24 24"><circle cx="12" cy="12" r="10.5" fill="#f4f4f4" stroke="#aaa" stroke-width="1.6"/><path d="M12 5v7.5l5 3.5" fill="none" stroke="#999"/></symbol>
    <symbol id="i-docoff" viewBox="0 0 24 24"><path d="M5 1.5h9.5l4.5 4.5v16.5H5z" fill="#f4f4f4" stroke="#bbb" stroke-width="1.4"/><path d="M8 10h8M8 13h8M8 16h8" stroke="#bbb"/></symbol>
    <symbol id="i-note" viewBox="0 0 24 24"><path d="M2 2h18v14l-5 5-5-2H2z" fill="#f8d93f" stroke="#b79a38"/><path d="M23 7L14 21l-3 2 .5-4L20 6z" fill="#b9a648" stroke="#fff" stroke-width=".6"/></symbol>
    <symbol id="i-wrench" viewBox="0 0 24 24"><path d="M10 10l11 11" stroke="#d9bc52" stroke-width="4"/><path d="M4 2a5 5 0 0 0 5 9" fill="none" stroke="#777" stroke-width="2.8"/><path d="M4 3l6 6" stroke="#888" stroke-width="2"/></symbol>
    <symbol id="i-qgis" viewBox="0 0 24 24"><circle cx="12" cy="11" r="8" fill="none" stroke="#6ea62f" stroke-width="4"/><path d="M14 13l7 9" stroke="#6ea62f" stroke-width="4"/><circle cx="12" cy="11" r="3" fill="#f0ab4a"/></symbol>
    <symbol id="i-gdal" viewBox="0 0 24 24"><circle cx="14" cy="9" r="8.5" fill="#5fa8c8"/><path d="M1 3l10 6M3 9l6-6" stroke="#222" stroke-width="1.3"/><text x="0" y="22" class="glyph bold narrow" font-size="8.5" fill="#111">GDAL</text></symbol>
    <symbol id="i-saga" viewBox="0 0 24 24"><circle cx="12" cy="12" r="10.5" fill="none" stroke="#1c63ad" stroke-width="2.4"/><path d="M21 9H10l-4 4 9 8M5 6l6 5" fill="none" stroke="#1c63ad" stroke-width="3"/></symbol>
    <symbol id="i-coord" viewBox="0 0 24 24"><path d="M6 2c8 4 12 12 12 20M18 2C10 6 6 14 6 22" fill="none" stroke="#555" stroke-width="1.8"/><circle cx="12" cy="12" r="9" fill="none" stroke="#888" stroke-dasharray="2 2"/></symbol>
    <symbol id="i-lock" viewBox="0 0 24 24"><path d="M7 11V7a5 5 0 0 1 10 0v4" fill="none" stroke="#777" stroke-width="2"/><rect x="4" y="11" width="16" height="12" rx="1" fill="#5c5c5c"/></symbol>
    <symbol id="i-crs" viewBox="0 0 24 24"><circle cx="12" cy="12" r="10" fill="#aaa" stroke="#555"/><path d="M2 12h20M12 2v20M4 6h16M4 18h16" stroke="#eee"/></symbol>
    <symbol id="i-bubble" viewBox="0 0 24 24"><path d="M12 2c6 0 11 3 11 9 0 4-3 7-6 8l2 4c-3-1-5-2-7-4-6 0-11-3-11-8S6 2 12 2z" fill="#555"/><circle cx="7" cy="11" r="1.5" fill="#fff"/><circle cx="12" cy="11" r="1.5" fill="#fff"/><circle cx="17" cy="11" r="1.5" fill="#fff"/></symbol>
    <symbol id="i-search" viewBox="0 0 24 24"><circle cx="10" cy="10" r="7.5" fill="none" stroke="#999" stroke-width="2"/><path d="M15.5 15.5L22 22" stroke="#999" stroke-width="2"/></symbol>
    <symbol id="i-float" viewBox="0 0 24 24"><rect x="1.5" y="1.5" width="21" height="21" rx="3" fill="none" stroke="#555" stroke-width="1.6"/><rect x="10" y="6" width="8" height="8" fill="none" stroke="#555" stroke-width="1.6"/><rect x="6" y="10" width="8" height="8" fill="#ececec" stroke="#555" stroke-width="1.6"/></symbol>
    <symbol id="i-close" viewBox="0 0 24 24"><rect x="1.5" y="1.5" width="21" height="21" rx="3" fill="none" stroke="#555" stroke-width="1.6"/><path d="M7 7l10 10M17 7L7 17" stroke="#444" stroke-width="3"/></symbol>
  </defs>
</svg>

<div class="window">
    <div class="titlebar">
        <span class="light red"></span><span class="light amber"></span><span class="light green"></span>
        <div class="title">*Unbenanntes Projekt — QGIS</div>
    </div>

    <div class="toolbar">
        <i class="handle"></i>
        <b class="tb"><svg><use href="#i-doc"/></svg></b>
        <b class="tb"><svg><use href="#i-folder"/></svg></b>
        <b class="tb"><svg><use href="#i-save"/></svg></b>
        <b class="tb"><svg><use href="#i-layout"/></svg></b>
        <b class="tb"><svg><use href="#i-layoutmgr"/></svg></b>
        <b class="tb"><svg><use href="#i-style"/></svg></b>
        <i class="handle"></i>
        <b class="tb"><svg><use href="#i-hand"/></svg></b>
        <b class="tb"><svg><use href="#i-pansel"/></svg></b>
        <b class="tb"><svg><use href="#i-zoomin"/></svg></b>
        <b class="tb"><svg><use href="#i-zoomout"/></svg></b>
        <b class="tb"><svg><use href="#i-zoomfull"/></svg></b>
        <b class="tb"><svg><use href="#i-zoomlayer"/></svg></b>
        <b class="tb"><svg><use href="#i-zoomsel"/></svg></b>
        <b class="tb off"><svg><use href="#i-zoom11"/></svg></b>
        <b class="tb"><svg><use href="#i-zoomlast"/></svg></b>
        <b class="tb off"><svg><use href="#i-zoomnext"/></svg></b>
        <b class="tb dim"><svg><use href="#i-mapnew"/></svg></b>
        <b class="tb dim"><svg><use href="#i-map3d"/></svg></b>
        <b class="tb"><svg><use href="#i-bmnew"/></svg></b>
        <b class="tb"><svg><use href="#i-bms"/></svg></b>
        <b class="tb"><svg><use href="#i-clock"/></svg></b>
        <b class="tb"><svg><use href="#i-refresh"/></svg></b>
        <i class="handle"></i>
        <b class="tb"><svg><use href="#i-identify"/></svg></b>
        <b class="tb"><svg><use href="#i-attr"/></svg></b>
        <b class="tb"><svg><use href="#i-abacus"/></svg></b>
        <b class="tb down"><svg><use href="#i-gear"/></svg></b>
        <b class="tb"><svg><use href="#i-sum"/></svg></b>
        <b class="tb"><svg><use href="#i-ruler"/></svg></b>
        <u class="caret"></u>
        <b class="tb"><svg><use href="#i-tip"/></svg></b>
        <b class="tb off"><svg><use href="#i-run"/></svg></b>
        <u class="caret"></u>
        <b class="tb"><svg><use href="#i-text"/></svg></b>
        <u class="caret"></u>
    </div>

    <div class="toolbar">
        <i class="handle"></i>
        <b class="tb"><svg><use href="#i-addlayer"/></svg></b>
        <b class="tb"><svg><use href="#i-gpkg"/></svg></b>
        <b class="tb"><svg><use href="#i-shp"/></svg></b>
        <b class="tb"><svg><use href="#i-feather"/></svg></b>
        <b class="tb"><svg><use href="#i-temp"/></svg></b>
        <s class="sep"></s>
        <b class="tb"><svg><use href="#i-virtual"/></svg></b>
        <s class="sep"></s>
        <i class="handle"></i>
        <b class="tb tb-wide off"><svg><use href="#i-pencils"/></svg></b>
        <b class="tb"><svg><use href="#i-pencil"/></svg></b>
        <b class="tb off"><svg><use href="#i-saveedit"/></svg></b>
        <b class="tb off"><svg><use href="#i-addpoly"/></svg></b>
        <b class="tb off"><svg><use href="#i-vertex"/></svg></b>
        <u class="caret"></u>
        <b class="tb off"><svg><use href="#i-edittable"/></svg></b>
        <b class="tb off"><svg><use href="#i-delete"/></svg></b>
        <b class="tb off"><svg><use href="#i-cut"/></svg></b>
        <b class="tb off"><svg><use href="#i-copy"/></svg></b>
        <b class="tb off"><svg><use href="#i-paste"/></svg></b>
        <b class="tb off"><svg><use href="#i-undo"/></svg></b>
        <b class="tb off"><svg><use href="#i-redo"/></svg></b>
        <i class="handle"></i>
        <b class="tb"><svg><use href="#i-abc"/></svg></b>
        <b class="tb"><svg><use href="#i-pie"/></svg></b>
        <s class="sep"></s>
        <b class="tb"><svg><use href="#i-abpin"/></svg></b>
        <b class="tb"><svg><use href="#i-abcred"/></svg></b>
        <s class="sep sep-wide"></s>
        <b class="tb off"><svg><use href="#i-lblpin"/></svg></b>
        <b class="tb off"><svg><use href="#i-lbleye"/></svg></b>
        <b class="tb off"><svg><use href="#i-lblarrow"/></svg></b>
        <b class="tb off"><svg><use href="#i-lblrot"/></svg></b>
        <b class="tb off"><svg><use href="#i-lbledit"/></svg></b>
        <i class="handle"></i>
        <b class="tb"><svg><use href="#i-db"/></svg></b>
        <i class="handle"></i>
        <b class="tb"><svg><use href="#i-globeadd"/></svg></b>
        <b class="tb"><svg><use href="#i-globefind"/></svg></b>
        <b class="tb"><svg><use href="#i-globebin"/></svg></b>
        <b class="tb"><svg class="hex"><use href="#i-hex"/></svg><em class="ring"></em></b>
        <i class="handle"></i>
        <b class="tb"><svg><use href="#i-python"/></svg></b>
        <b class="tb"><svg><use href="#i-fire"/></svg></b>
        <b class="tb"><svg><use href="#i-earth"/></svg></b>
        <b class="tb"><svg><use href="#i-leaf"/></svg></b>
        <b class="tb"><svg><use href="#i-info"/></svg></b>
        <b class="tb"><svg><use href="#i-swipe"/></svg></b>
        <b class="tb"><svg><use href="#i-greenmap"/></svg></b>
        <b class="tb"><svg><use href="#i-raster"/></svg></b>
        <i class="handle handle-tight"></i>
        <b class="tb"><svg><use href="#i-book"/></svg></b>
        <i class="handle handle-tight"></i>
        <b class="tb"><svg><use href="#i-node"/></svg></b>
        <b class="tb"><svg><use href="#i-tablesync"/></svg></b>
    </div>

    <div class="toolbar">
        <i class="handle"></i>
        <b class="tb off"><svg><use href="#i-curve"/></svg></b>
        <b class="tb off"><svg><use href="#i-square"/></svg></b>
        <b class="tb off"><svg><use href="#i-blobarrow"/></svg></b>
        <u class="caret"></u>
        <b class="tb off"><svg><use href="#i-blobrot"/></svg></b>
        <b class="tb off"><svg><use href="#i-blobhex"/></svg></b>
        <b class="tb off"><svg><use href="#i-ringadd"/></svg></b>
        <b class="tb off"><svg><use href="#i-partadd"/></svg></b>
        <b class="tb off"><svg><use href="#i-ringadd"/></svg></b>
        <b class="tb off"><svg><use href="#i-ringdel"/></svg></b>
        <b class="tb off"><svg><use href="#i-partdel"/></svg></b>
        <b class="tb off"><svg><use href="#i-reshape"/></svg></b>
        <b class="tb off"><svg><use href="#i-offset"/></svg></b>
        <b class="tb off"><svg><use href="#i-reverse"/></svg></b>
        <b class="tb off"><svg><use href="#i-trim"/></svg></b>
        <b class="tb off"><svg><use href="#i-split"/></svg></b>
        <b class="tb off"><svg><use href="#i-splitparts"/></svg></b>
        <b class="tb off"><svg><use href="#i-merge"/></svg></b>
        <b class="tb off"><svg><use href="#i-lines"/></svg></b>
        <b class="tb off"><svg><use href="#i-rotmark"/></svg></b>
        <u class="caret"></u>
        <i class="handle"></i>
        <b class="tb off"><svg><use href="#i-hist"/></svg></b>
        <b class="tb off"><svg><use href="#i-histarr"/></svg></b>
        <b class="tb off"><svg><use href="#i-hist"/></svg></b>
        <b class="tb off"><svg><use href="#i-histarr"/></svg></b>
        <b class="tb off"><svg><use href="#i-sunup"/></svg></b>
        <b class="tb off"><svg><use href="#i-sundown"/></svg></b>
        <b class="tb off"><svg><use href="#i-contup"/></svg></b>
        <b class="tb off"><svg><use href="#i-contdown"/></svg></b>
        <b class="tb off"><svg><use href="#i-gammaup"/></svg></b>
        <b class="tb off"><svg><use href="#i-gammadown"/></svg></b>
    </div>

    <div class="toolbar">
        <i class="handle"></i>
        <b class="tb-select"><svg><use href="#i-select"/></svg></b>
        <b class="tb-drop"><u class="caret caret-in"></u></b>
        <b class="tb"><svg><use href="#i-exprsel"/></svg></b>
        <u class="caret"></u>
        <b class="tb tb-gap"><svg><use href="#i-desel"/></svg></b>
        <u class="caret"></u>
        <b class="tb"><svg><use href="#i-selpin"/></svg></b>
        <i class="handle"></i>
        <b class="tb"><svg><use href="#i-locator"/></svg></b>
        <b class="tb"><svg><use href="#i-mapbrush"/></svg></b>
        <i class="handle"></i>
        <i class="handle"></i>
        <b class="tb"><svg><use href="#i-route"/></svg></b>
    </div>

    <div class="workspace">
        <section class="dock dock-left">
            <div class="dock-head">
                <span>Layer</span>
                <svg class="dock-btn"><use href="#i-float"/></svg>
                <svg class="dock-btn"><use href="#i-close"/></svg>
            </div>
            <div class="dock-tools">
                <b class="pt"><svg><use href="#i-brush"/></svg></b>
                <b class="pt"><svg><use href="#i-addgroup"/></svg></b>
                <b class="pt"><svg><use href="#i-eye"/></svg></b>
                <b class="pt"><svg><use href="#i-filter"/></svg></b>
                <b class="pt"><svg><use href="#i-exprfilter"/></svg></b>
                <u class="caret"></u>
                <b class="pt"><svg><use href="#i-expand"/></svg></b>
                <b class="pt"><svg><use href="#i-collapse"/></svg></b>
                <b class="pt"><svg><use href="#i-remove"/></svg></b>
            </div>
            <div class="tree">
                <div class="layer-row">
                    <span class="check">&#10003;</span>
                    <span class="swatch"></span>
                    <a class="layer-name">Mittelsachsen</a>
                </div>
            </div>
            <div class="tabs">
                <span class="tab">Browser</span>
                <span class="tab tab-on">Layer</span>
            </div>
        </section>

        <main class="canvas">
            <svg class="region" viewBox="0 0 1020 900" width="340" height="300">
                <polygon points="338,100 348,96 360,92 375,84 390,80 415,85 422,95 430,100 440,110 462,112 468,95 480,98 490,96 500,98 512,92 518,85 535,86 545,82 556,76 570,78 585,72 595,78 600,88 598,102 603,112 605,125 603,148 612,152 622,160 632,170 640,180 632,200 636,212 630,225 615,240 635,240 634,255 640,265 635,280 637,295 630,310 643,322 635,340 625,355 617,373 632,360 650,345 665,338 680,335 705,325 725,322 745,318 758,330 770,338 795,352 797,370 780,395 785,410 800,414 818,410 800,430 792,440 780,460 795,465 800,470 797,490 803,515 818,525 830,535 834,555 838,570 850,590 838,600 858,618 875,620 885,635 898,645 883,652 880,685 900,692 915,690 925,712 932,730 960,750 938,770 905,776 880,780 855,788 868,815 858,835 850,850 852,873 830,878 812,862 820,852 800,852 790,845 768,825 755,808 745,790 725,768 730,752 720,742 715,720 698,724 680,730 660,730 645,735 640,715 640,700 620,690 600,685 580,676 560,675 542,680 525,690 510,665 498,668 485,672 470,655 455,640 452,622 452,600 438,590 425,583 400,580 410,550 400,522 385,520 370,520 355,528 340,528 325,510 310,508 295,512 270,530 250,552 238,548 225,548 212,535 200,520 195,500 180,504 165,505 150,495 140,482 125,470 108,458 102,450 100,430 98,400 115,393 135,392 155,388 172,365 200,375 188,350 178,340 190,325 183,305 185,292 190,275 195,260 205,233 230,238 250,238 265,252 285,248 300,252 320,250 335,232 325,210 332,195 315,182 300,175 310,155 325,130 330,112"/>
            </svg>
        </main>

        <section class="dock dock-right">
            <div class="dock-head">
                <span>Verarbeitungswerkzeuge</span>
                <svg class="dock-btn"><use href="#i-float"/></svg>
                <svg class="dock-btn"><use href="#i-close"/></svg>
            </div>
            <div class="dock-tools">
                <b class="pt"><svg><use href="#i-gears"/></svg></b>
                <b class="pt"><svg><use href="#i-pysmall"/></svg></b>
                <b class="pt"><svg><use href="#i-clockoff"/></svg></b>
                <b class="pt"><svg><use href="#i-docoff"/></svg></b>
                <s class="sep sep-thin"></s>
                <b class="pt"><svg><use href="#i-note"/></svg></b>
                <s class="sep sep-thin"></s>
                <b class="pt"><svg><use href="#i-wrench"/></svg></b>
            </div>
            <div class="find">
                <svg class="find-icon"><use href="#i-search"/></svg>
                <span>calculator</span>
                <span class="clear">&#10005;</span>
            </div>
            <div class="tree algos">
                <div class="algo"><u class="twist"></u><svg><use href="#i-clockoff"/></svg>Kürzlich verwendet</div>
                <div class="algo"><u class="twist"></u><svg><use href="#i-qgis"/></svg>Rasteranalyse</div>
                <div class="algo"><u class="twist"></u><svg><use href="#i-qgis"/></svg>Vektortabelle</div>
                <div class="algo"><u class="twist"></u><svg><use href="#i-gdal"/></svg>GDAL</div>
                <div class="algo algo-off"><u class="twist"></u><svg><use href="#i-saga"/></svg>SAGA</div>
            </div>
            <div class="tabs">
                <span class="tab tab-style">Layergestaltung</span>
                <span class="tab tab-on tab-tools">Verarbeitungswerkzeuge</span>
            </div>
        </section>
    </div>

    <footer class="status">
        <div class="locator"><svg class="find-icon"><use href="#i-search"/></svg>Zu suchender Typ (⌘K)</div>
        <span class="message">3 Legendeneinträge entfernt.</span>

        <span class="lab lab-first">Koordinate</span>
        <div class="field f-coord">351968,5786663</div>
        <svg class="st-icon st-coord"><use href="#i-coord"/></svg>
        <span class="lab lab-scale">Maßstab</span>
        <div class="field f-scale">1:709668<u class="combo"></u></div>
        <svg class="st-icon st-lock"><use href="#i-lock"/></svg>
        <span class="lab lab-mag">Vergrößerung</span>
        <div class="field f-mag">100%<u class="spin"></u></div>
        <span class="lab lab-rot">Drehung</span>
        <div class="field f-rot">0,0 °<u class="spin"></u></div>
        <span class="check check-small">&#10003;</span>
        <span class="lab lab-draw">Zeichnen</span>
        <svg class="st-icon st-crs"><use href="#i-crs"/></svg>
        <span class="lab lab-epsg">EPSG:25833</span>
        <svg class="st-icon st-bubble"><use href="#i-bubble"/></svg>
    </footer>
</div>
</body>
</html>
```

FILE: styles.css
```css
* {
    box-sizing: border-box;
}

html, body {
    margin: 0;
    padding: 0;
    background: #fff;
}

body {
    height: 1527px;
    overflow: hidden;
    font-family: Inter, "Liberation Sans", sans-serif;
    font-size: 12px;
    color: #222;
}

.defs {
    position: absolute;
}

.glyph {
    font-family: "Liberation Sans", sans-serif;
}

.glyph.serif {
    font-family: "Liberation Serif", serif;
    font-weight: bold;
}

.glyph.bold {
    font-weight: bold;
}

.glyph.narrow {
    letter-spacing: -.6px;
}

.window {
    display: flex;
    flex-direction: column;
    width: 2560px;
    height: 1416px;
    margin: 37px 0 0 56px;
    background: #ececec;
    border: 1px solid #c6c6c6;
    border-radius: 10px;
    box-shadow: 0 14px 50px rgba(0, 0, 0, .38);
    overflow: hidden;
}

.titlebar {
    position: relative;
    display: flex;
    align-items: center;
    gap: 8px;
    height: 29px;
    flex: none;
    padding-left: 7px;
    background: #fbf6f3;
    border-bottom: 1px solid #bcbcbc;
}

.light {
    width: 12px;
    height: 12px;
    border-radius: 50%;
}

.red { background: #ff4d4a; }
.amber { background: #fdab24; }
.green { background: #20bc3c; }

.title {
    position: absolute;
    left: 0;
    right: 0;
    text-align: center;
    font-size: 13.2px;
    font-weight: 600;
    color: #444;
}

.toolbar {
    display: flex;
    align-items: center;
    height: 39px;
    flex: none;
    padding-left: 1px;
    background: linear-gradient(#f7f7f7, #e9e9e9);
    border-bottom: 1px solid #b9b9b9;
}

.titlebar + .toolbar {
    height: 38px;
}

.handle {
    width: 10px;
    height: 22px;
    margin-left: 7px;
    background: radial-gradient(circle, #adadad .8px, transparent 1px) center / 3px 3px;
    background-clip: content-box;
    padding: 2px;
    flex: none;
}

.handle:first-child {
    margin-left: 0;
}

.handle-tight {
    margin-left: 4px;
}

.tb {
    position: relative;
    display: flex;
    align-items: center;
    justify-content: center;
    width: 33px;
    height: 34px;
    flex: none;
}

.tb svg {
    width: 25px;
    height: 25px;
}

.tb-wide {
    width: 36px;
}

.tb-gap {
    margin-left: 3px;
}

.tb.off svg {
    opacity: .3;
    filter: grayscale(1);
}

.tb.dim svg {
    opacity: .8;
}

.tb.down {
    background: #dcdcdc;
    border: 1px solid #b5b5b5;
    border-radius: 3px;
}

.tb svg.hex {
    width: 22px;
    height: 22px;
}

.ring {
    position: absolute;
    left: -4px;
    top: -2px;
    width: 47px;
    height: 44px;
    border: 5px solid #d9230f;
    border-radius: 50%;
}

.caret {
    position: relative;
    display: block;
    width: 11px;
    height: 4px;
    flex: none;
}

.caret::after {
    content: "";
    position: absolute;
    left: 2px;
    top: 0;
    width: 7px;
    height: 4px;
    background: #444;
    clip-path: polygon(0 0, 100% 0, 50% 100%);
}

.sep {
    display: block;
    position: relative;
    width: 5px;
    height: 26px;
    flex: none;
}

.sep::after {
    content: "";
    position: absolute;
    left: 2px;
    top: 0;
    bottom: 0;
    width: 1px;
    background: #c8c8c8;
}

.sep-wide {
    width: 8px;
}

.sep-wide::after {
    left: 3px;
}

.sep-thin {
    width: 7px;
}

.tb-select {
    display: flex;
    align-items: center;
    justify-content: center;
    width: 32px;
    height: 30px;
    margin-left: 1px;
    flex: none;
    background: #dcdcdc;
    border: 1px solid #aeaeae;
    border-radius: 3px;
}

.tb-select svg {
    width: 26px;
    height: 26px;
}

.tb-drop {
    display: flex;
    align-items: center;
    width: 11px;
    height: 30px;
    margin-left: 1px;
    flex: none;
    background: #d2d2d2;
    border: 1px solid #aeaeae;
    border-radius: 2px;
}

.caret-in {
    width: 9px;
}

.caret-in::after {
    left: 1px;
}

.workspace {
    display: flex;
    flex: 1;
    min-height: 0;
}

.dock {
    display: flex;
    flex-direction: column;
    flex: none;
}

.dock-left {
    width: 500px;
}

.dock-right {
    width: 446px;
    padding-left: 8px;
}

.dock-head {
    display: flex;
    align-items: center;
    gap: 5px;
    height: 21px;
    flex: none;
    padding: 0 1px 0 2px;
    font-size: 11.2px;
}

.dock-head span {
    margin-right: auto;
}

.dock-left .dock-head {
    padding: 0 9px 0 2px;
}

.dock-btn {
    width: 10px;
    height: 10px;
}

.dock-tools {
    display: flex;
    align-items: center;
    height: 26px;
    flex: none;
    padding-left: 3px;
}

.pt {
    display: flex;
    align-items: center;
    justify-content: center;
    width: 25px;
    height: 24px;
    flex: none;
}

.pt svg {
    width: 16px;
    height: 16px;
}

.tree {
    flex: 1;
    min-height: 0;
    background: #fff;
    border: 1px solid #bdbdbd;
}

.dock-left .tree {
    margin-top: 2px;
    margin-right: 6px;
}

.layer-row {
    display: flex;
    align-items: center;
    height: 19px;
    padding-left: 23px;
    background: #1268e4;
}

.check {
    display: flex;
    align-items: center;
    justify-content: center;
    width: 14px;
    height: 14px;
    flex: none;
    background: #fff;
    border: 1px solid #9a9a9a;
    font-size: 12px;
    font-weight: bold;
    color: #111;
}

.swatch {
    width: 16px;
    height: 16px;
    margin-left: 5px;
    background: #9b82b8;
}

.layer-name {
    margin-left: 6px;
    font-size: 13px;
    font-weight: 600;
    color: #fff;
    text-decoration: underline;
}

.tabs {
    display: flex;
    align-items: flex-start;
    height: 28px;
    flex: none;
    padding-top: 2px;
    font-size: 12px;
}

.dock-right .tabs {
    font-size: 12.9px;
}

.tab {
    display: flex;
    align-items: center;
    justify-content: center;
    width: 74px;
    height: 23px;
    background: #dadada;
    border: 1px solid #c4c4c4;
    border-bottom-color: #bbb;
    border-radius: 2px 0 0 2px;
}

.tab-on {
    width: 56px;
    height: 26px;
    background: #f0f0f0;
    border-radius: 0 0 3px 3px;
}

.tab-style {
    width: 121px;
}

.tab-tools {
    width: 176px;
}

.canvas {
    position: relative;
    flex: 1;
    background: #fff;
    border: 1px solid #b0b0b0;
}

.region {
    position: absolute;
    left: 562px;
    top: 497px;
}

.region polygon {
    fill: #8b5894;
    stroke: #5f5f5f;
    stroke-width: 2;
    stroke-linejoin: round;
}

.find {
    display: flex;
    align-items: center;
    height: 22px;
    flex: none;
    margin-top: 4px;
    padding: 0 4px 0 8px;
    background: #fff;
    border: 1px solid #c4c4c4;
    border-radius: 3px;
    font-size: 13px;
}

.find-icon {
    width: 12px;
    height: 12px;
    margin-right: 8px;
    flex: none;
}

.clear {
    display: flex;
    align-items: center;
    justify-content: center;
    width: 13px;
    height: 11px;
    margin-left: auto;
    background: #9a9a9a;
    color: #fff;
    font-size: 8px;
    clip-path: polygon(25% 0, 100% 0, 100% 100%, 25% 100%, 0 50%);
}

.algos {
    margin-top: 1px;
    font-size: 13px;
}

.algo {
    display: flex;
    align-items: center;
    height: 18px;
    padding-left: 8px;
}

.algo svg {
    width: 15px;
    height: 15px;
    margin: 0 6px 0 11px;
}

.algo-off {
    color: #a0a0a0;
}

.twist {
    display: block;
    width: 4px;
    height: 8px;
    background: #555;
    clip-path: polygon(0 0, 100% 50%, 0 100%);
}

.status {
    display: flex;
    align-items: center;
    height: 30px;
    flex: none;
    padding-top: 2px;
    font-size: 11px;
    color: #333;
    white-space: nowrap;
}

.locator {
    display: flex;
    align-items: center;
    width: 255px;
    height: 22px;
    margin-left: 3px;
    padding-left: 8px;
    background: #fff;
    border: 1px solid #c4c4c4;
    border-radius: 3px;
    font-size: 12.5px;
    color: #999;
}

.message {
    margin-left: 9px;
    color: #111;
}

.lab {
    flex: none;
}

.lab-first { margin-left: auto; width: 57px; }
.lab-scale { margin-left: 16px; width: 44px; }
.lab-mag { margin-left: 9px; width: 71px; }
.lab-rot { margin-left: 9px; width: 45px; }
.lab-draw { margin-left: 6px; width: 47px; }
.lab-epsg { margin-left: 4px; width: 65px; }

.field {
    position: relative;
    display: flex;
    align-items: center;
    height: 22px;
    padding-left: 4px;
    flex: none;
    background: #fff;
    border: 1px solid #c0c0c0;
    border-radius: 2px;
    color: #222;
}

.f-coord { width: 109px; margin-left: 3px; }
.f-scale { width: 91px; margin-left: 5px; }
.f-mag { width: 90px; margin-left: 5px; }
.f-rot { width: 92px; margin-left: 9px; }

.combo {
    position: absolute;
    right: 0;
    top: 0;
    bottom: 0;
    width: 19px;
    background: #ececec;
    border-left: 1px solid #c0c0c0;
}

.combo::after {
    content: "";
    position: absolute;
    left: 5px;
    top: 8px;
    border: 4px solid transparent;
    border-top: 5px solid #555;
    border-bottom: 0;
}

.spin {
    position: absolute;
    right: 0;
    top: 0;
    bottom: 0;
    width: 14px;
    background: #f4f4f4;
    border-left: 1px solid #d0d0d0;
}

.spin::before, .spin::after {
    content: "";
    position: absolute;
    left: 3px;
    border: 4px solid transparent;
    border-top: 0;
    border-bottom: 5px solid #666;
}

.spin::before {
    top: 4px;
}

.spin::after {
    bottom: 4px;
    border-bottom: 0;
    border-top: 5px solid #666;
}

.check-small {
    margin-left: 7px;
    font-weight: normal;
}

.st-icon {
    width: 14px;
    height: 14px;
    flex: none;
}

.st-coord {
    margin-left: 5px;
}

.st-lock {
    margin-left: 12px;
}

.st-crs {
    margin-left: 17px;
}

.st-bubble {
    width: 16px;
    height: 16px;
    margin: 0 7px 0 23px;
}
```
